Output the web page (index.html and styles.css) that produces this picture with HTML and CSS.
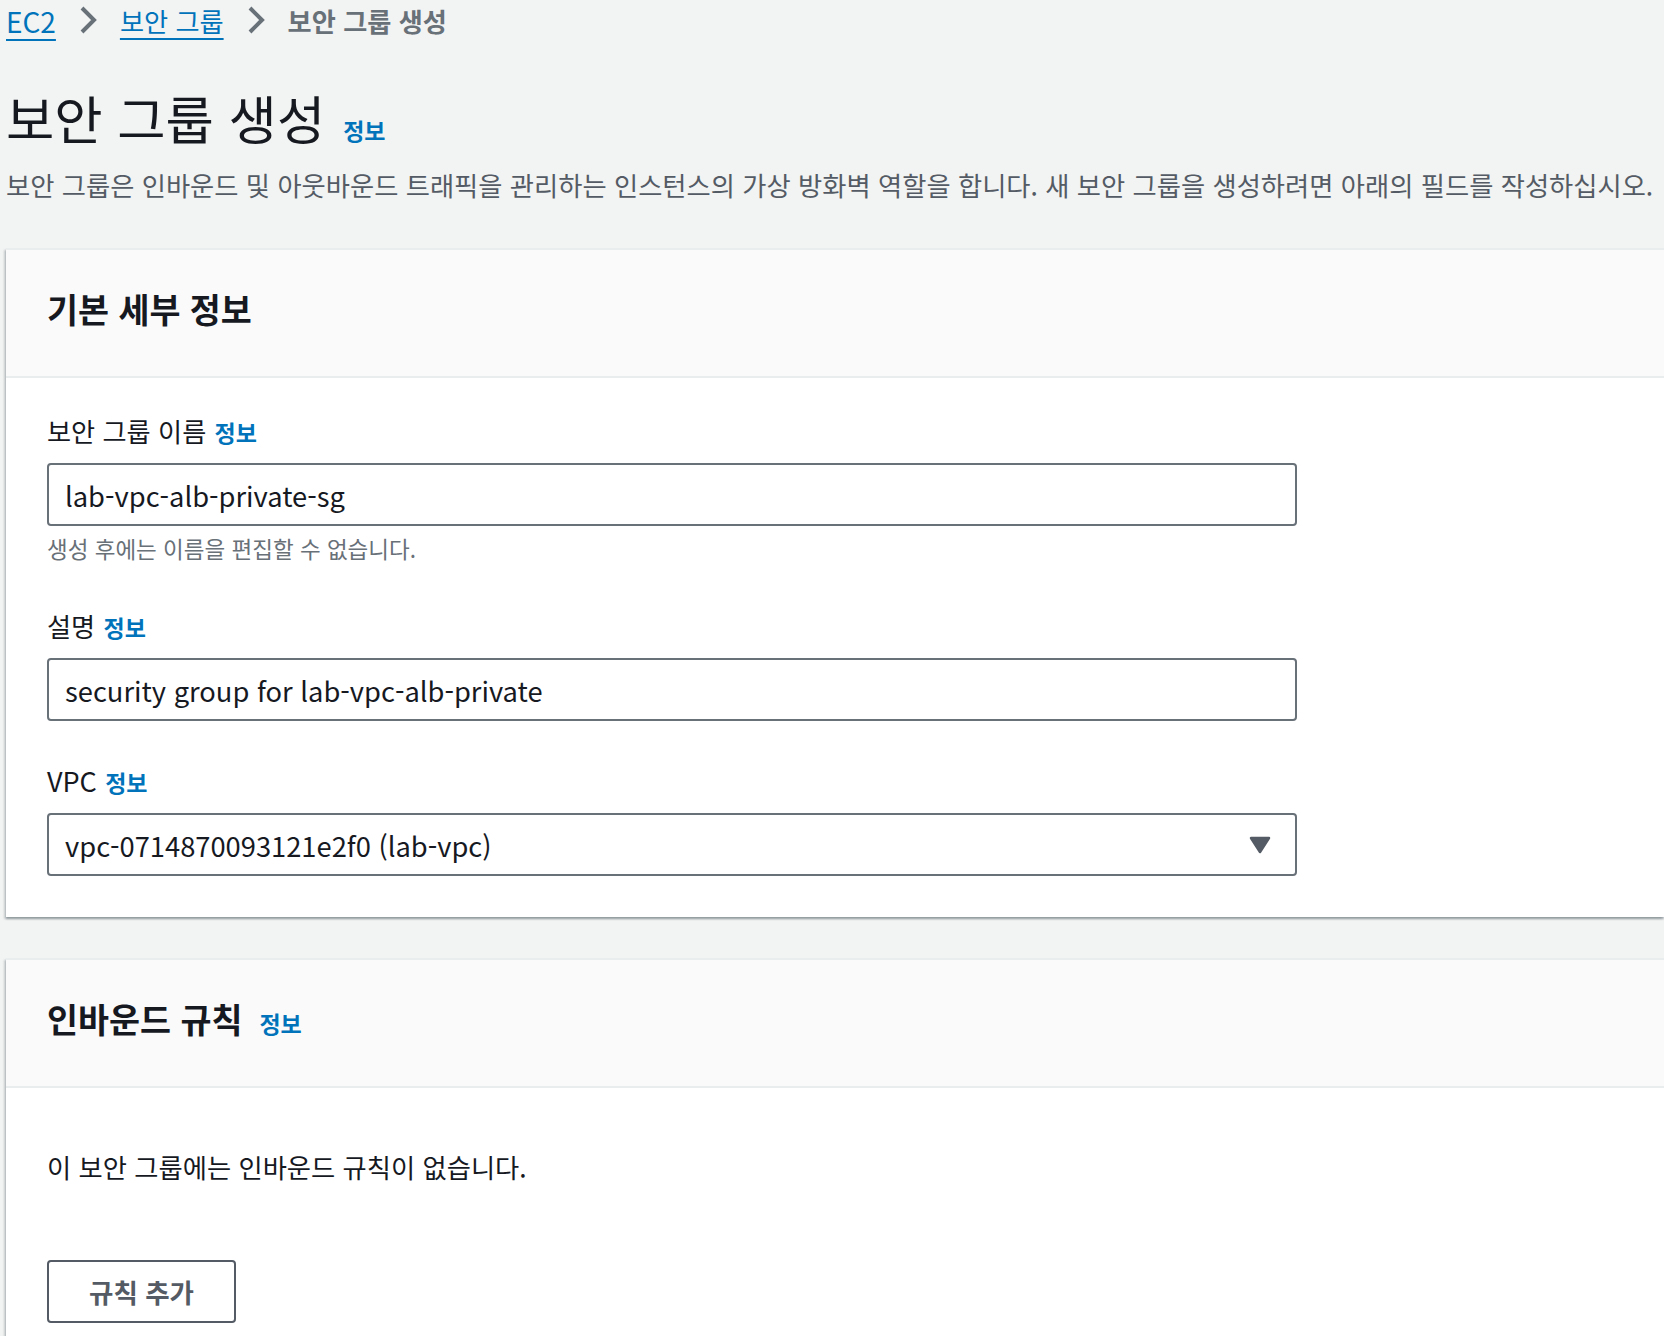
FILE: index.html
```html
<!DOCTYPE html>
<html lang="ko">
<head>
<meta charset="utf-8">
<title>보안 그룹 생성</title>
<link rel="stylesheet" href="styles.css">
</head>
<body>
<div class="page">
  <nav class="breadcrumb">
    <a class="crumb-link" href="#"><span class="latin-bc">EC2</span></a>
    <svg class="chev" width="18" height="30" viewBox="0 0 18 30"><path d="M3 3 L15 15 L3 27" fill="none" stroke="#687078" stroke-width="4"/></svg>
    <a class="crumb-link" href="#">보안 그룹</a>
    <svg class="chev" width="18" height="30" viewBox="0 0 18 30"><path d="M3 3 L15 15 L3 27" fill="none" stroke="#687078" stroke-width="4"/></svg>
    <span class="crumb-current">보안 그룹 생성</span>
  </nav>

  <header class="page-head">
    <h1 class="title">보안 그룹 생성</h1>
    <a class="info info-title" href="#">정보</a>
  </header>
  <p class="desc">보안 그룹은 인바운드 및 아웃바운드 트래픽을 관리하는 인스턴스의 가상 방화벽 역할을 합니다. 새 보안 그룹을 생성하려면 아래의 필드를 작성하십시오.</p>

  <section class="panel panel-basic">
    <div class="panel-header">
      <h2 class="panel-title">기본 세부 정보</h2>
    </div>
    <div class="panel-body fields">
      <div class="field">
        <div class="label">보안 그룹 이름 <a class="info" href="#">정보</a></div>
        <div class="input">lab-vpc-alb-private-sg</div>
        <div class="hint">생성 후에는 이름을 편집할 수 없습니다.</div>
      </div>
      <div class="field">
        <div class="label">설명 <a class="info" href="#">정보</a></div>
        <div class="input">security group for lab-vpc-alb-private</div>
      </div>
      <div class="field">
        <div class="label"><span class="latin-label">VPC</span> <a class="info" href="#">정보</a></div>
        <div class="input select">
          <span>vpc-0714870093121e2f0 (lab-vpc)</span>
          <svg class="caret" width="22" height="18" viewBox="0 0 22 18"><polygon points="2,2 20,2 11,16" fill="#545b64" stroke="#545b64" stroke-width="2.5" stroke-linejoin="round"/></svg>
        </div>
      </div>
    </div>
  </section>

  <section class="panel panel-inbound">
    <div class="panel-header">
      <h2 class="panel-title">인바운드 규칙</h2>
      <a class="info info-title" href="#">정보</a>
    </div>
    <div class="panel-body inbound-body">
      <p class="empty">이 보안 그룹에는 인바운드 규칙이 없습니다.</p>
      <button class="btn" type="button">규칙 추가</button>
    </div>
  </section>
</div>
</body>
</html>
```

FILE: styles.css
```css
html, body {
  margin: 0;
  padding: 0;
}
body {
  background: #f2f3f3;
  font-family: "Noto Sans CJK KR", "Noto Sans", sans-serif;
  color: #16191f;
  overflow: hidden;
}
.page {
  padding-left: 6px;
}
.latin-bc {
  font-size: 28px;
}
.latin-label {
  font-size: 27px;
}
.breadcrumb {
  display: flex;
  align-items: center;
  gap: 23px;
  height: 42px;
  font-size: 26.2px;
}
.crumb-link {
  color: #0073bb;
  text-decoration: underline;
  text-decoration-thickness: 2px;
  text-underline-offset: 6px;
  line-height: 42px;
}
.crumb-current {
  color: #687078;
  font-weight: 700;
  line-height: 42px;
}
.chev {
  display: block;
  margin-top: -2px;
}
.page-head {
  display: flex;
  align-items: baseline;
  gap: 18px;
  margin-top: 45px;
}
.title {
  margin: 0;
  font-size: 52.5px;
  font-weight: 400;
  line-height: 60px;
}
.info {
  color: #0073bb;
  font-weight: 700;
  font-size: 23px;
  text-decoration: none;
}
.desc {
  margin: 21px 0 0 0;
  font-size: 26.3px;
  line-height: 34px;
  color: #545b64;
  white-space: nowrap;
}
.panel {
  background: #fff;
  border-top: 2px solid #eaeded;
  box-shadow: 0 2px 2px 0 rgba(0, 28, 36, 0.3), -2px 2px 2px 0 rgba(0, 28, 36, 0.15);
}
.panel-basic {
  margin-top: 46px;
}
.panel-inbound {
  margin-top: 41px;
}
.panel-header {
  display: flex;
  align-items: baseline;
  gap: 17px;
  background: #fafafa;
  border-bottom: 2px solid #eaeded;
  height: 128px;
  box-sizing: border-box;
  padding: 39px 41px 0 41px;
}
.panel-title {
  margin: 0;
  font-size: 33.7px;
  font-weight: 700;
  line-height: 40px;
}
.panel-body {
  padding: 36px 41px 41px 41px;
}
.fields {
  display: flex;
  flex-direction: column;
  gap: 43px;
}
.field {
  display: flex;
  flex-direction: column;
}
.label {
  font-size: 26.2px;
  line-height: 34px;
  margin-bottom: 14px;
}
.label .info {
  margin-left: 1px;
}
.input {
  width: 1250px;
  height: 63px;
  box-sizing: border-box;
  border: 2px solid #687078;
  border-radius: 4px;
  background: #fff;
  padding: 0 16px;
  display: flex;
  align-items: center;
  font-size: 27.3px;
  color: #16191f;
}
.select {
  justify-content: space-between;
  padding-right: 24px;
}
.caret {
  display: block;
}
.hint {
  margin-top: 7px;
  margin-bottom: 3px;
  font-size: 22.5px;
  line-height: 30px;
  color: #687078;
}
.inbound-body {
  padding-top: 62px;
  padding-bottom: 60px;
}
.empty {
  margin: 0;
  font-size: 26.3px;
  line-height: 34px;
}
.btn {
  display: block;
  margin-top: 76px;
  width: 189px;
  height: 63px;
  border: 2px solid #545b64;
  border-radius: 4px;
  background: #fff;
  color: #545b64;
  font-family: "Noto Sans CJK KR", "Noto Sans", sans-serif;
  font-size: 26.5px;
  font-weight: 700;
  padding: 0;
}
```
